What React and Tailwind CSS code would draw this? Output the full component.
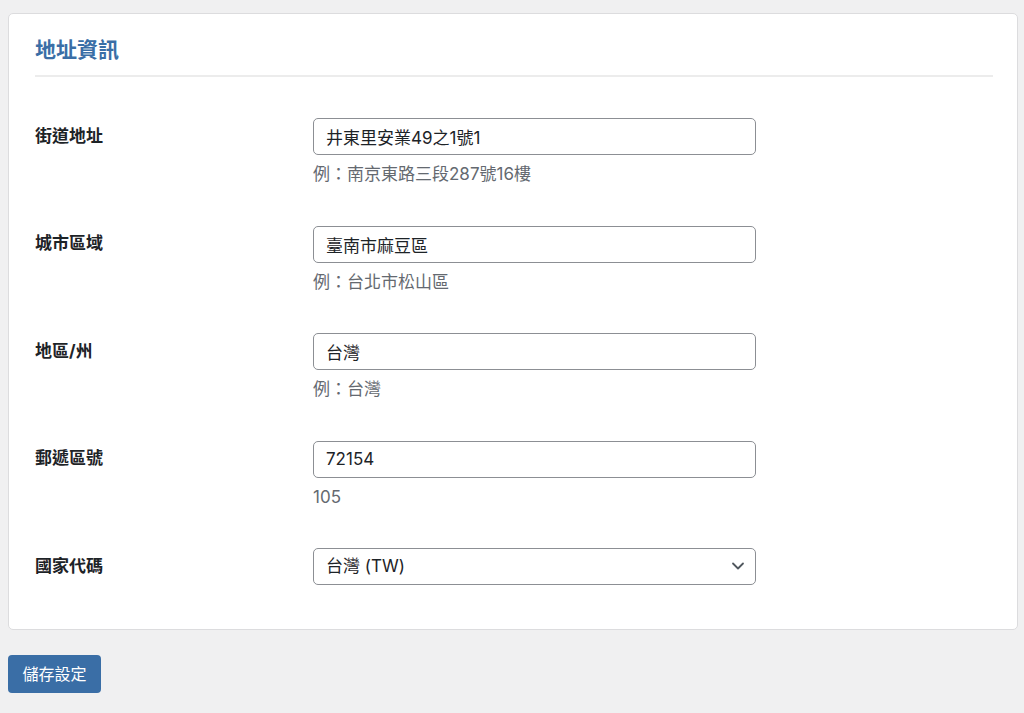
import React, { useState } from "react";

const font = {
  fontFamily:
    '"Inter", "Noto Sans CJK TC", "Noto Sans", sans-serif',
};

const fields = [
  { key: "street", label: "街道地址", value: "井東里安業49之1號1", hint: "例：南京東路三段287號16樓" },
  { key: "city", label: "城市區域", value: "臺南市麻豆區", hint: "例：台北市松山區" },
  { key: "state", label: "地區/州", value: "台灣", hint: "例：台灣" },
  { key: "zip", label: "郵遞區號", value: "72154", hint: "105" },
];

export default function App() {
  const [values, setValues] = useState(
    Object.fromEntries(fields.map((f) => [f.key, f.value]))
  );
  const [country, setCountry] = useState("TW");

  return (
    <div className="bg-[#f0f0f1] min-h-screen pt-[13px] px-[8px] pb-[19px] text-[#1d2327]" style={font}>
      {/* Card */}
      <div className="bg-white border border-[#dcdcde] rounded-[5px] w-[1010px] px-[26px] pt-[21px] pb-[44px]">
        <h2 className="text-[21px] leading-[30px] font-bold text-[#3a6ea6]">地址資訊</h2>
        <div className="mt-[10px] h-[2px] w-[958px] bg-[#ececec]" />

        <div className="mt-[41px] flex flex-col gap-[41.5px]">
          {fields.map((f) => (
            <div key={f.key} className="flex items-start">
              <label className="w-[278px] shrink-0 h-[37px] flex items-center text-[17px] font-bold text-[#1d2327]">
                {f.label}
              </label>
              <div className="flex flex-col">
                <input
                  type="text"
                  value={values[f.key]}
                  onChange={(e) => setValues({ ...values, [f.key]: e.target.value })}
                  className="w-[443px] h-[37px] border border-[#8c8f94] rounded-[5px] px-[12px] text-[17px] text-[#1d2327] focus:outline-none"
                />
                <p className="mt-[9px] text-[17px] leading-[20px] text-[#646970]">{f.hint}</p>
              </div>
            </div>
          ))}

          <div className="flex items-start">
            <label className="w-[278px] shrink-0 h-[37px] flex items-center text-[17px] font-bold text-[#1d2327]">
              國家代碼
            </label>
            <div className="relative w-[443px] h-[37px]">
              <select
                value={country}
                onChange={(e) => setCountry(e.target.value)}
                className="appearance-none w-full h-full border border-[#8c8f94] rounded-[5px] pl-[12px] pr-[36px] text-[17px] text-[#1d2327] bg-white focus:outline-none"
              >
                <option value="TW">台灣 (TW)</option>
                <option value="JP">日本 (JP)</option>
                <option value="US">美國 (US)</option>
              </select>
              <svg
                className="absolute right-[11px] top-[13px] pointer-events-none"
                width="14"
                height="10"
                viewBox="0 0 14 10"
                fill="none"
              >
                <path d="M2 2.5 L7 7.5 L12 2.5" stroke="#50575e" strokeWidth="1.8" strokeLinecap="round" strokeLinejoin="round" />
              </svg>
            </div>
          </div>
        </div>
      </div>

      {/* Save */}
      <button className="mt-[25px] w-[93px] h-[38px] bg-[#3a6ea6] text-white text-[16px] rounded-[4px]">
        儲存設定
      </button>
    </div>
  );
}
